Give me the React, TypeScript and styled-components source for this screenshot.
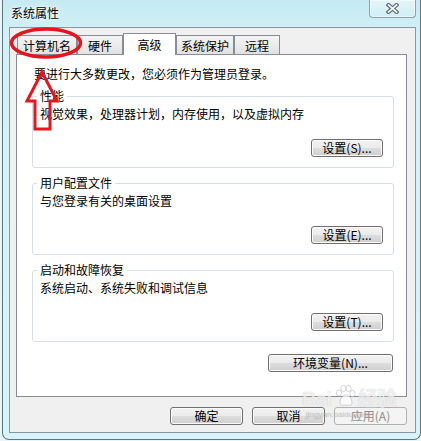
import React from 'react';
import styled, { createGlobalStyle } from 'styled-components';

const Global = createGlobalStyle`
  html, body { margin: 0; padding: 0; }
  body {
    background: #e9f6f9;
    font-family: "Noto Sans CJK SC", "Liberation Sans", sans-serif;
    font-size: 12px;
    color: #000;
    overflow: hidden;
  }
`;

const Stage = styled.div`
  position: relative;
  width: 421px;
  height: 441px;
  overflow: hidden;
`;

const Window = styled.div`
  margin-left: 2px;
  width: 419px;
  height: 440px;
  box-sizing: border-box;
  border: 1px solid #5d7680;
  border-top: none;
  border-radius: 0 0 7px 7px;
  background: linear-gradient(to bottom, #c6eaf3 0px, #d4f1f7 40px, #d6f4f9 100%);
  display: flex;
  flex-direction: column;
  padding: 0 4px 6px 6px;
`;

const TitleBar = styled.div`
  height: 27px;
  display: flex;
  align-items: flex-start;
  flex-shrink: 0;
`;

const Title = styled.div`
  margin: 5px 0 0 2px;
  line-height: 16px;
  font-size: 12px;
  text-shadow: 0 0 6px #fff, 0 0 3px #fff;
`;

const CloseButton = styled.div`
  margin-left: auto;
  width: 47px;
  height: 18px;
  box-sizing: border-box;
  border: 1px solid #8aa2aa;
  border-top: none;
  border-radius: 0 0 4px 4px;
  background: linear-gradient(to bottom, #e4f5f9, #d0eef5);
  box-shadow: inset 0 0 0 1px rgba(255, 255, 255, 0.5);
  display: flex;
  align-items: center;
  justify-content: center;
`;

const Client = styled.div`
  flex: 1;
  box-sizing: border-box;
  border: 1px solid #87979d;
  background: #f0f0f0;
  display: flex;
  flex-direction: column;
  padding-top: 5px;
`;

const TabStrip = styled.div`
  display: flex;
  align-items: flex-end;
  height: 21px;
  padding-left: 7px;
`;

const Tab = styled.div<{ $w: number; $active?: boolean }>`
  width: ${(p) => p.$w}px;
  height: ${(p) => (p.$active ? 22 : 19)}px;
  box-sizing: border-box;
  border: 1px solid #898c95;
  border-bottom: none;
  background: ${(p) =>
    p.$active ? '#fff' : 'linear-gradient(to bottom, #f4f4f4 0%, #ececec 50%, #e1e1e1 100%)'};
  margin-bottom: ${(p) => (p.$active ? -1 : 0)}px;
  position: relative;
  z-index: ${(p) => (p.$active ? 2 : 1)};
  text-align: center;
  line-height: 16px;
  padding-top: ${(p) => (p.$active ? 3 : 2)}px;
  white-space: nowrap;
`;

const Panel = styled.div`
  margin: 0 8px 0 6px;
  height: 343px;
  box-sizing: border-box;
  border: 1px solid #898c95;
  background: #fff;
  display: flex;
  flex-direction: column;
  padding: 11px 12px 0 15px;
  position: relative;
  z-index: 1;
`;

const Intro = styled.div`
  margin-left: 2px;
  line-height: 16px;
`;

const Group = styled.fieldset`
  margin: 7px 0 0 0;
  border: 1px solid #d5dfe5;
  border-radius: 3px;
  padding: 0 10px 10px 7px;
  min-width: 0;
  &:first-of-type {
    margin-top: 6px;
  }
`;

const Legend = styled.legend`
  padding: 0 3px;
  margin-left: -3px;
  line-height: 16px;
  font-size: 12px;
`;

const Desc = styled.div`
  margin-top: 2px;
  line-height: 16px;
`;

const ButtonRow = styled.div<{ $mt: number; $mr?: number }>`
  display: flex;
  justify-content: flex-end;
  gap: 9px;
  margin-top: ${(p) => p.$mt}px;
  margin-right: ${(p) => p.$mr ?? 0}px;
`;

const Button = styled.button<{ $w: number }>`
  width: ${(p) => p.$w}px;
  height: 18px;
  box-sizing: border-box;
  border: 1px solid #707070;
  border-radius: 3px;
  background: linear-gradient(to bottom, #f2f2f2 0%, #ebebeb 50%, #dddddd 50%, #cfcfcf 100%);
  box-shadow: inset 0 0 0 1px #fbfbfb;
  font-family: "Noto Sans CJK SC", "Liberation Sans", sans-serif;
  font-size: 12px;
  line-height: 14px;
  color: #000;
  padding: 0;
  white-space: nowrap;
  &:disabled {
    border-color: #adb2b5;
    background: #f4f4f4;
    box-shadow: none;
    color: #8d8d8d;
  }
`;

const BottomRow = styled.div`
  display: flex;
  justify-content: flex-end;
  gap: 9px;
  margin: 10px 8px 0 0;
`;

const Annotation = styled.svg`
  position: absolute;
  left: 0;
  top: 0;
  pointer-events: none;
  z-index: 10;
`;

const Watermark = styled.div`
  position: absolute;
  left: 302px;
  top: 388px;
  z-index: 9;
  pointer-events: none;
  color: rgba(255, 255, 255, 0.7);
  text-shadow: 0 0 1px rgba(120, 120, 120, 0.4);
  font-family: "Liberation Sans", "Noto Sans CJK SC", sans-serif;
  display: flex;
  flex-direction: column;
  align-items: flex-start;
`;

const WatermarkMain = styled.div`
  display: flex;
  align-items: center;
  font-size: 20px;
  font-weight: bold;
  line-height: 22px;
  letter-spacing: -0.5px;
`;

const WatermarkSub = styled.div`
  font-size: 8px;
  line-height: 10px;
  margin-left: 4px;
  color: rgba(200, 200, 200, 0.6);
`;

const Paw = () => (
  <svg width="24" height="24" viewBox="0 0 24 24" style={{ margin: '-6px 1px 0 1px' }}>
    <g fill="rgba(255,255,255,0.7)" stroke="rgba(140,140,140,0.45)" strokeWidth="0.8">
      <ellipse cx="6" cy="9" rx="2.6" ry="3.2" />
      <ellipse cx="10.5" cy="4.5" rx="2.6" ry="3.2" />
      <ellipse cx="15.5" cy="4.5" rx="2.6" ry="3.2" />
      <ellipse cx="19.5" cy="9.5" rx="2.6" ry="3.2" />
      <path d="M7 19 C7 14 10 11 13 11 C16 11 19 14 19 19 C19 22 15 21 13 21 C11 21 7 22 7 19 Z" />
    </g>
  </svg>
);

const CloseGlyph = () => (
  <svg width="13" height="11" viewBox="0 0 13 11">
    <path d="M2.5 2 L10.5 9 M10.5 2 L2.5 9" stroke="#5a666d" strokeWidth="4" strokeLinecap="square" />
    <path d="M2.5 2 L10.5 9 M10.5 2 L2.5 9" stroke="#eef3f5" strokeWidth="1.8" strokeLinecap="square" />
  </svg>
);

const tabs: { label: string; w: number; active?: boolean }[] = [
  { label: '计算机名', w: 60 },
  { label: '硬件', w: 46 },
  { label: '高级', w: 53, active: true },
  { label: '系统保护', w: 58 },
  { label: '远程', w: 46 },
];

const groups = [
  { title: '性能', desc: '视觉效果，处理器计划，内存使用，以及虚拟内存', btn: '设置(S)...' },
  { title: '用户配置文件', desc: '与您登录有关的桌面设置', btn: '设置(E)...' },
  { title: '启动和故障恢复', desc: '系统启动、系统失败和调试信息', btn: '设置(T)...' },
];

export default function App() {
  return (
    <Stage>
      <Global />
      <Window>
        <TitleBar>
          <Title>系统属性</Title>
          <CloseButton>
            <CloseGlyph />
          </CloseButton>
        </TitleBar>
        <Client>
          <TabStrip>
            {tabs.map((t) => (
              <Tab key={t.label} $w={t.w} $active={t.active}>
                {t.label}
              </Tab>
            ))}
          </TabStrip>
          <Panel>
            <Intro>要进行大多数更改，您必须作为管理员登录。</Intro>
            {groups.map((g) => (
              <Group key={g.title}>
                <Legend>{g.title}</Legend>
                <Desc>{g.desc}</Desc>
                <ButtonRow $mt={17}>
                  <Button $w={72}>{g.btn}</Button>
                </ButtonRow>
              </Group>
            ))}
            <ButtonRow $mt={12} $mr={1}>
              <Button $w={125}>环境变量(N)...</Button>
            </ButtonRow>
          </Panel>
          <BottomRow>
            <Button $w={73}>确定</Button>
            <Button $w={73}>取消</Button>
            <Button $w={73} disabled>
              应用(A)
            </Button>
          </BottomRow>
        </Client>
      </Window>
      <Watermark>
        <WatermarkMain>
          Bai
          <Paw />
          经验
        </WatermarkMain>
        <WatermarkSub>jingyan.baidu.com</WatermarkSub>
      </Watermark>
      <Annotation width="421" height="441" viewBox="0 0 421 441">
        <ellipse cx="46" cy="43" rx="34.5" ry="14" fill="none" stroke="#e5141d" strokeWidth="3.5" />
        <polygon
          points="42,72 57,101 50,101 50,129 35,129 35,101 27,101"
          fill="none"
          stroke="#e5141d"
          strokeWidth="3"
          strokeLinejoin="miter"
        />
      </Annotation>
    </Stage>
  );
}
